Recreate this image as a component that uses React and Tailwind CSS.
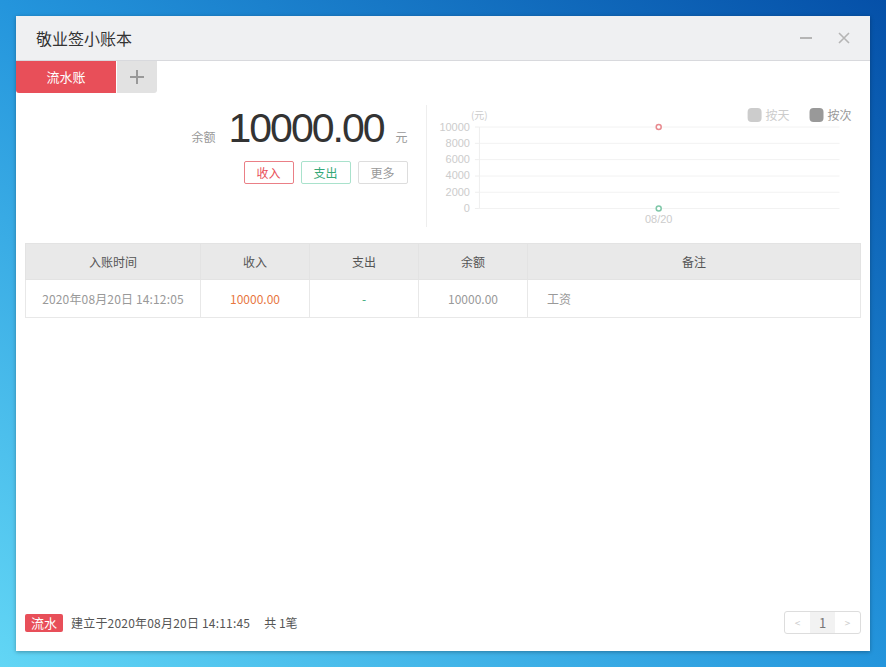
import React from 'react';

// Simple ledger window on a desktop background
const ROWS = [
  { time: '2020年08月20日 14:12:05', income: '10000.00', expense: '-', balance: '10000.00', note: '工资' },
];

const Chart = () => {
  const ys = [34, 50.3, 66.6, 83, 99.3, 115.6];
  const labels = ['10000', '8000', '6000', '4000', '2000', '0'];
  return (
    <svg width="435" height="150" viewBox="0 0 435 150" className="block">
      <rect x="321" y="15" width="14" height="14" rx="4" fill="#cccccc" />
      <text x="339" y="27" fontSize="12" fill="#cccccc" fontFamily="Noto Sans CJK SC, sans-serif">按天</text>
      <rect x="383" y="15" width="14" height="14" rx="4" fill="#999999" />
      <text x="401" y="27" fontSize="12" fill="#999999" fontFamily="Noto Sans CJK SC, sans-serif">按次</text>
      <text x="44" y="26" fontSize="10" fill="#cccccc" fontFamily="Noto Sans CJK SC, sans-serif">(元)</text>
      {ys.map((y, i) => (
        <g key={i}>
          <line x1="52" x2="413" y1={y} y2={y} stroke="#f2f2f2" strokeWidth="1" />
          <line x1="48" x2="52" y1={y} y2={y} stroke="#eeeeee" strokeWidth="1" />
          <text x="43" y={y + 3.5} fontSize="11" fill="#cccccc" textAnchor="end" fontFamily="Liberation Sans, sans-serif">{labels[i]}</text>
        </g>
      ))}
      <line x1="52.5" x2="52.5" y1="34" y2="115.6" stroke="#eeeeee" strokeWidth="1" />
      <text x="232" y="130" fontSize="11" fill="#cccccc" textAnchor="middle" fontFamily="Liberation Sans, sans-serif">08/20</text>
      <circle cx="232" cy="34" r="2.5" fill="#fff" stroke="#e88a8f" strokeWidth="1.5" />
      <circle cx="232" cy="115.6" r="2.5" fill="#fff" stroke="#7fc7a8" strokeWidth="1.5" />
    </svg>
  );
};

const App = () => {
  return (
    <div className="w-[886px] h-[667px] overflow-hidden bg-[linear-gradient(to_top_right,#62d6f5,#2495dc_50%,#0550a8)] pt-[16px] pl-[16px] font-['Noto_Sans_CJK_SC',sans-serif]">
      <div className="w-[854px] h-[635px] bg-white flex flex-col shadow-[0_1px_4px_rgba(0,0,0,0.3)]">
        {/* Title bar */}
        <div className="h-[45px] shrink-0 bg-[#eff0f2] border-b border-[#d8d9dd] flex items-center justify-between pl-[20px] pr-[20px]">
          <span className="text-[16px] text-[#333]">敬业签小账本</span>
          <div className="flex items-center gap-[26px]">
            <div className="w-[12px] h-[12px] flex items-center">
              <div className="w-[12px] h-[2px] bg-[#b5b5b5]" />
            </div>
            <svg width="12" height="12" viewBox="0 0 12 12">
              <path d="M1 1L11 11M11 1L1 11" stroke="#b5b5b5" strokeWidth="1.6" />
            </svg>
          </div>
        </div>

        {/* Tabs */}
        <div className="h-[32px] shrink-0 flex gap-[1px]">
          <div className="w-[100px] bg-[#e84f59] rounded-bl-[3px] flex items-center justify-center text-white text-[13px]">流水账</div>
          <div className="w-[40px] bg-[#e2e2e2] rounded-br-[3px] flex items-center justify-center">
            <svg width="16" height="16" viewBox="0 0 16 16">
              <path d="M8 1V15M1 8H15" stroke="#999" strokeWidth="2" />
            </svg>
          </div>
        </div>

        <div className="flex-1 flex flex-col px-[9px]">
          {/* Summary */}
          <div className="h-[150px] shrink-0 flex">
            <div className="w-[401px] flex flex-col items-end pr-[18px] pt-[11px]">
              <div className="flex items-baseline">
                <span className="text-[12px] text-[#999] mr-[13px]">余额</span>
                <span className="font-['Liberation_Sans',sans-serif] text-[41px] leading-[48px] tracking-[-2px] text-[#333]">10000.00</span>
                <span className="text-[12px] text-[#999] ml-[12px]">元</span>
              </div>
              <div className="flex gap-[7px] mt-[9px]">
                <button className="w-[50px] h-[23px] border border-[#ea7f86] rounded-[2px] text-[12px] text-[#e84f59]">收入</button>
                <button className="w-[50px] h-[23px] border border-[#a9e2cc] rounded-[2px] text-[12px] text-[#36a878]">支出</button>
                <button className="w-[50px] h-[23px] border border-[#dddddd] rounded-[2px] text-[12px] text-[#999]">更多</button>
              </div>
            </div>
            <div className="w-[1px] bg-[#eeeeee] mt-[12px] mb-[16px]" />
            <Chart />
          </div>

          {/* Table */}
          <table className="w-[836px] border-collapse text-[12px] table-fixed">
            <thead>
              <tr className="bg-[#e9e9e9] h-[36px] text-[#555]">
                <th className="w-[175px] font-normal border border-[#e3e3e3]">入账时间</th>
                <th className="w-[109px] font-normal border border-[#e3e3e3]">收入</th>
                <th className="w-[109px] font-normal border border-[#e3e3e3]">支出</th>
                <th className="w-[109px] font-normal border border-[#e3e3e3]">余额</th>
                <th className="font-normal border border-[#e3e3e3]">备注</th>
              </tr>
            </thead>
            <tbody>
              {ROWS.map((r) => (
                <tr key={r.time} className="h-[38px]">
                  <td className="text-center text-[#999] tracking-[0.15px] border border-[#e8e8e8]">{r.time}</td>
                  <td className="text-center text-[#e8773f] border border-[#e8e8e8]">{r.income}</td>
                  <td className="text-center text-[#36a878] border border-[#e8e8e8]">{r.expense}</td>
                  <td className="text-center text-[#999] border border-[#e8e8e8]">{r.balance}</td>
                  <td className="text-left pl-[19px] text-[#999] border border-[#e8e8e8]">{r.note}</td>
                </tr>
              ))}
            </tbody>
          </table>

          <div className="flex-1" />

          {/* Footer */}
          <div className="flex items-center justify-between pb-[17px]">
            <div className="flex items-center">
              <span className="w-[38px] h-[18px] bg-[#e84f59] rounded-[2px] text-white text-[13px] flex items-center justify-center">流水</span>
              <span className="ml-[8px] text-[12px] text-[#555] tracking-[0.2px]">建立于2020年08月20日 14:11:45</span>
              <span className="ml-[14px] text-[12px] text-[#555]">共 1笔</span>
            </div>
            <div className="flex h-[23px] border border-[#dddddd] rounded-[3px] overflow-hidden">
              <span className="w-[25px] flex items-center justify-center text-[10px] text-[#ccc]">&lt;</span>
              <span className="w-[25px] flex items-center justify-center text-[13px] text-[#777] bg-[#f2f2f2]">1</span>
              <span className="w-[25px] flex items-center justify-center text-[10px] text-[#ccc]">&gt;</span>
            </div>
          </div>
        </div>
      </div>
    </div>
  );
};

export default App;
